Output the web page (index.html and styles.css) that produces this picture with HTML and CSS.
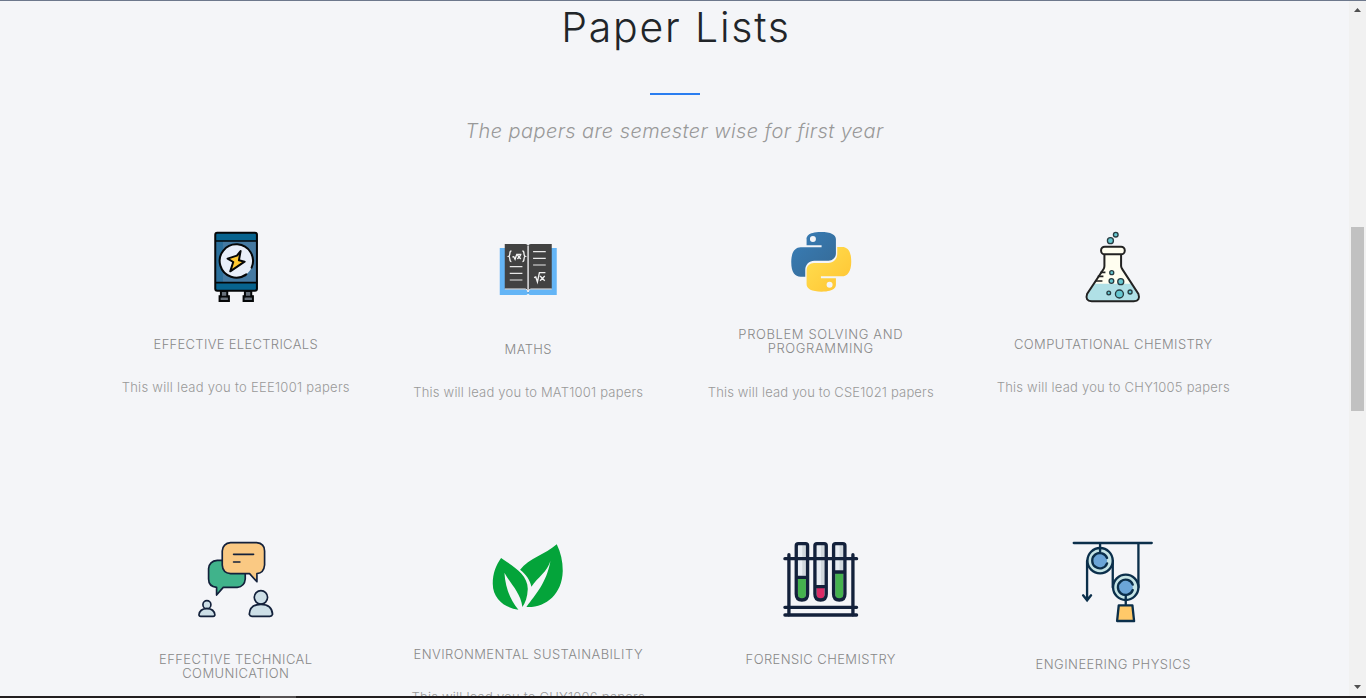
FILE: index.html
```html
<!DOCTYPE html>
<html lang="en">
<head>
<meta charset="utf-8">
<title>Paper Lists</title>
<link rel="stylesheet" href="styles.css">
</head>
<body>
<div class="window">
<div class="view">
<main class="papers">
<h1 class="heading">Paper Lists</h1>
<div class="rule"></div>
<p class="lead">The papers are semester wise for first year</p>
<div class="grid">
<article class="card">
<svg class="icon h70" viewBox="-12.75 30 240 210"><rect x="45" y="31" width="127" height="176" rx="7" fill="#07638e"/><path d="M48 57h121v125H48z" fill="#457aa2"/><path d="M48 57h20v125H48z" fill="#2b709c"/><rect x="45" y="32" width="125" height="174" rx="6" fill="none" stroke="#050708" stroke-width="6"/><path d="M46 57h125M46 182h125" stroke="#050708" stroke-width="5"/><circle cx="108" cy="117" r="50" fill="#e9eff9"/><path d="M138 157a50 50 0 1 1 16-20M128 163l7-3" fill="none" stroke="#050708" stroke-width="6" stroke-linecap="round"/><path d="M121 87L110 101 82 110l17 10-9 28 43-29-17-4z" fill="#ffc931" stroke="#050708" stroke-width="6" stroke-linejoin="round"/><path d="M62 207h19v16h5v14H58v-14h4zM134 207h19v16h5v14h-28v-14h4z" fill="#68717b" stroke="#050708" stroke-width="6"/><path d="M58 224h28M130 224h28" stroke="#050708" stroke-width="5"/></svg>
<h2 class="name t31">EFFECTIVE ELECTRICALS</h2>
<p class="note t28">This will lead you to EEE1001 papers</p>
</article>
<article class="card">
<svg class="icon h75" viewBox="-5.25 0 240 225"><path d="M30 48h171v141h-81l-5-4-5 4H30z" fill="#64b5f6"/><path d="M45 36h62q6 0 8 6 2-6 8-6h63v136h-63q-6 0-8 11-2-11-8-11H45z" fill="#424242"/><path d="M45 171h62q6 1 8 9 2-8 8-9h63" fill="none" stroke="#eef1f5" stroke-width="3"/><path d="M115 42v138" stroke="#f4f4f6" stroke-width="4"/><path d="M60 104h38M60 124h38M60 144h38M130 59h38M130 79h38M130 99h38" stroke="#e8e8e8" stroke-width="3.5"/><path d="M65 57c-8 0-2 14-8 16 6 2 0 16 8 16M98 57c8 0 2 14 8 16-6 2 0 16-8 16M68 75l4-1 4 8 5-15h14M83 69l10 12M93 69L83 81M133 137l5-2 5 15 6-28h18M151 132l14 14M165 132l-14 14" fill="none" stroke="#f2f2f2" stroke-width="4"/></svg>
<h2 class="name t39">MATHS</h2>
<p class="note t21">This will lead you to MAT1001 papers</p>
</article>
<article class="card">
<svg class="icon h60" viewBox="2.25 30 240 180"><defs><linearGradient id="blue" x2="1" y2="1"><stop stop-color="#387eb8"/><stop offset="1" stop-color="#366994"/></linearGradient><linearGradient id="yellow" x1="1" y1="1" x2="0" y2="0"><stop stop-color="#ffe052"/><stop offset="1" stop-color="#ffc331"/></linearGradient></defs><path d="M122 30c-44 0-43 18-43 22v18h45v6H61c-16 0-28 14-28 44 0 32 11 44 28 44h14v-20c0-17 12-28 27-28h43c12 0 22-9 22-22V52c0-14-15-22-45-22zM98 42a9 9 0 1 1 0 18 9 9 0 0 1 0-18z" fill="url(#blue)" fill-rule="evenodd"/><path transform="rotate(180 123 119.5)" d="M122 30c-44 0-43 18-43 22v18h45v6H61c-16 0-28 14-28 44 0 32 11 44 28 44h14v-20c0-17 12-28 27-28h43c12 0 22-9 22-22V52c0-14-15-22-45-22zM98 42a9 9 0 1 1 0 18 9 9 0 0 1 0-18z" fill="url(#yellow)" fill-rule="evenodd"/></svg>
<h2 class="name t62">PROBLEM SOLVING AND<br>PROGRAMMING</h2>
<p class="note t16">This will lead you to CSE1021 papers</p>
</article>
<article class="card">
<svg class="icon h70" viewBox="-8.25 21 240 210"><path d="M86 88v38L58 178h106l-28-52V88z" fill="#fffef0"/><path d="M55 176h111l22 36q4 17-14 17H48q-18-2-14-17z" fill="#b0e0e6"/><path d="M86 88v35q0 5-3 10L34 207q-7 20 14 22h126q21-2 14-22l-48-74q-4-6-4-10V88" fill="none" stroke="#222" stroke-width="6"/><rect x="76" y="65" width="71" height="23" rx="11" fill="#fffef0" stroke="#222" stroke-width="6"/><path d="M74 142h15M66 154h17M60 168h20" stroke="#222" stroke-width="5"/><g fill="#65c7d0" stroke="#263b40" stroke-width="4"><circle cx="120" cy="29" r="7"/><circle cx="104" cy="47" r="9"/><circle cx="108" cy="143" r="6"/><circle cx="107" cy="168" r="7"/><circle cx="135" cy="170" r="9"/><circle cx="99" cy="204" r="5.5"/><circle cx="131" cy="207" r="12"/><circle cx="163" cy="201" r="6"/></g></svg>
<h2 class="name t38">COMPUTATIONAL CHEMISTRY</h2>
<p class="note t22">This will lead you to CHY1005 papers</p>
</article>
<article class="card">
<svg class="icon h75" viewBox="17.25 21 240 225"><g stroke="#13213b" stroke-width="5" stroke-linejoin="round"><path d="M81 76h60q24 2 24 25v31q-2 23-24 25h-42l-20 23v-23q-24-2-24-25v-31q2-23 26-25z" fill="#40b38b"/><path d="M121 23h78q24 2 24 25v42q-2 24-23 26v24l-22-24h-57q-24-2-25-26V48q2-23 25-25z" fill="#fac983"/><path d="M130 58h60M130 81h19" fill="none" stroke-linecap="round"/><g fill="#cddfe7"><circle cx="50" cy="209" r="12"/><path d="M26 240q2-19 24-19t24 19q-1 4-5 4H31q-4 0-5-4z"/><circle cx="212" cy="187" r="20"/><path d="M177 238q2-30 35-30t35 30q-2 6-8 6h-54q-6 0-8-6z"/></g></g></svg>
<h2 class="name t40">EFFECTIVE TECHNICAL<br>COMUNICATION</h2>
</article>
<article class="card">
<svg class="icon h70" viewBox="15.75 21 240 210"><g fill="#04a43a"><path d="M55 69c34 24 81 48 80 94-1 23-7 41-16 53-6-44-36-69-54-103 3 45 17 82 42 111-35-4-77-29-77-78 0-31 10-56 25-77z"/><path d="M112 104c27-34 75-45 110-76 12 25 18 50 18 80-2 72-53 111-109 108 28-39 60-72 72-138-10 33-37 48-57 77-4-20-16-37-34-51z"/></g></svg>
<h2 class="name t42">ENVIRONMENTAL SUSTAINABILITY</h2>
<p class="note t22">This will lead you to CHY1006 papers</p>
</article>
<article class="card">
<svg class="icon h75" viewBox="17.25 21 240 225"><path d="M41 59v182M233 59v182M29 71h215M29 217h215M29 240h215" stroke="#13213b" stroke-width="10" stroke-linecap="round"/><path d="M63 27h34v150q0 19-17 19t-17-19z" fill="#e8edf3"/><path d="M81 29h12v92H81z" fill="#d0d7dc"/><path d="M68 127h24v49q0 16-12 16t-12-16z" fill="#45b24e"/><path d="M119 27h34v150q0 19-17 19t-17-19z" fill="#e8edf3"/><path d="M137 29h12v122h-12z" fill="#d0d7dc"/><path d="M124 156h24v20q0 16-12 16t-12-16z" fill="#da2b66"/><path d="M175 27h34v150q0 19-17 19t-17-19z" fill="#e8edf3"/><path d="M193 29h12v76h-12z" fill="#d0d7dc"/><path d="M180 111h24v65q0 16-12 16t-12-16z" fill="#45b24e"/><path d="M63 71h34M119 71h34M175 71h34" stroke="#13213b" stroke-width="10"/><path d="M63 32q0-6 6-6h22q6 0 6 6v145q0 18-17 18t-17-18zM119 32q0-6 6-6h22q6 0 6 6v145q0 18-17 18t-17-18zM175 32q0-6 6-6h22q6 0 6 6v145q0 18-17 18t-17-18zM63 127h34M119 155h34M175 111h34" fill="none" stroke="#13213b" stroke-width="10"/></svg>
<h2 class="name t40">FORENSIC CHEMISTRY</h2>
</article>
<article class="card">
<svg class="icon h80" viewBox="24.75 21 240 240"><g fill="none" stroke="#0b2f4b" stroke-width="7" stroke-linecap="round"><path d="M27 24h234M221 24v133M67 77v116M55 181l12 15 12-15M144 77v80"/><circle cx="106" cy="77" r="38" fill="#c5e4e5"/><circle cx="183" cy="157" r="38" fill="#c5e4e5"/><circle cx="106" cy="77" r="21" fill="#6ba5d7" stroke="none"/><circle cx="183" cy="157" r="21" fill="#6ba5d7" stroke="none"/><path d="M127 69a23 23 0 1 0 0 16M106 28v26M204 149a23 23 0 1 0 0 16M183 181v27"/><path d="M162 211h41l5 47h-51z" fill="#ffc969" stroke-linejoin="round"/></g></svg>
<h2 class="name t46">ENGINEERING PHYSICS</h2>
</article>
</div>
</main>
<div class="scrollbar"><div class="arrow up"></div><div class="thumb"></div><div class="arrow down"></div></div>
</div>
<div class="taskbar"><div class="active"></div></div>
</div>
</body>
</html>
```
FILE: styles.css
```css
body{margin:0;background:#f4f5f8;font-family:Inter,"Open Sans",sans-serif;font-weight:300;overflow:hidden}
.window{display:flex;flex-direction:column;height:698px}
.view{display:flex;justify-content:space-between;height:695px;flex:none;border-top:1px solid #6d788c;overflow:hidden}
.papers{width:1170px;margin-left:89.5px}
.heading{margin:0;padding-left:3px;text-align:center;font-size:41px;line-height:52px;font-weight:300;letter-spacing:1.8px;color:#212529}
.rule{width:50px;height:2px;margin:40px auto 25px;background:#2a7df0}
.lead{margin:0 0 90px;text-align:center;font-size:20px;line-height:22px;font-style:italic;letter-spacing:.42px;color:#999}
.grid{display:grid;grid-template-columns:repeat(4,1fr);grid-auto-rows:310px}
.card{text-align:center}
.icon{display:block;width:80px;margin:0 auto 35px;overflow:visible}
.h60{height:60px}
.h70{height:70px}
.h75{height:75px}
.h80{height:80px}
.name{margin:0;font-size:13px;line-height:14.3px;font-weight:300;color:#888}
.note{margin:23px 0 0;font-size:13px;line-height:26px;color:#999}
.t16{letter-spacing:.16px}
.t21{letter-spacing:.21px}
.t22{letter-spacing:.22px}
.t28{letter-spacing:.28px}
.t31{letter-spacing:.31px}
.t38{letter-spacing:.38px}
.t39{letter-spacing:.39px}
.t40{letter-spacing:.4px}
.t42{letter-spacing:.42px}
.t46{letter-spacing:.46px}
.t62{letter-spacing:.62px}
.scrollbar{display:flex;flex-direction:column;align-items:center;width:17px;background:#f1f1f1}
.arrow{width:7px;height:4px;background:#505050}
.up{margin-top:7px;clip-path:polygon(50% 0,100% 100%,0 100%)}
.thumb{width:13px;height:184px;margin-top:215px;background:#c1c1c1}
.down{margin-top:274px;clip-path:polygon(0 0,100% 0,50% 100%)}
.taskbar{height:2px;background:#231f20}
.active{width:36px;height:2px;margin-left:260px;background:#555152}
```
